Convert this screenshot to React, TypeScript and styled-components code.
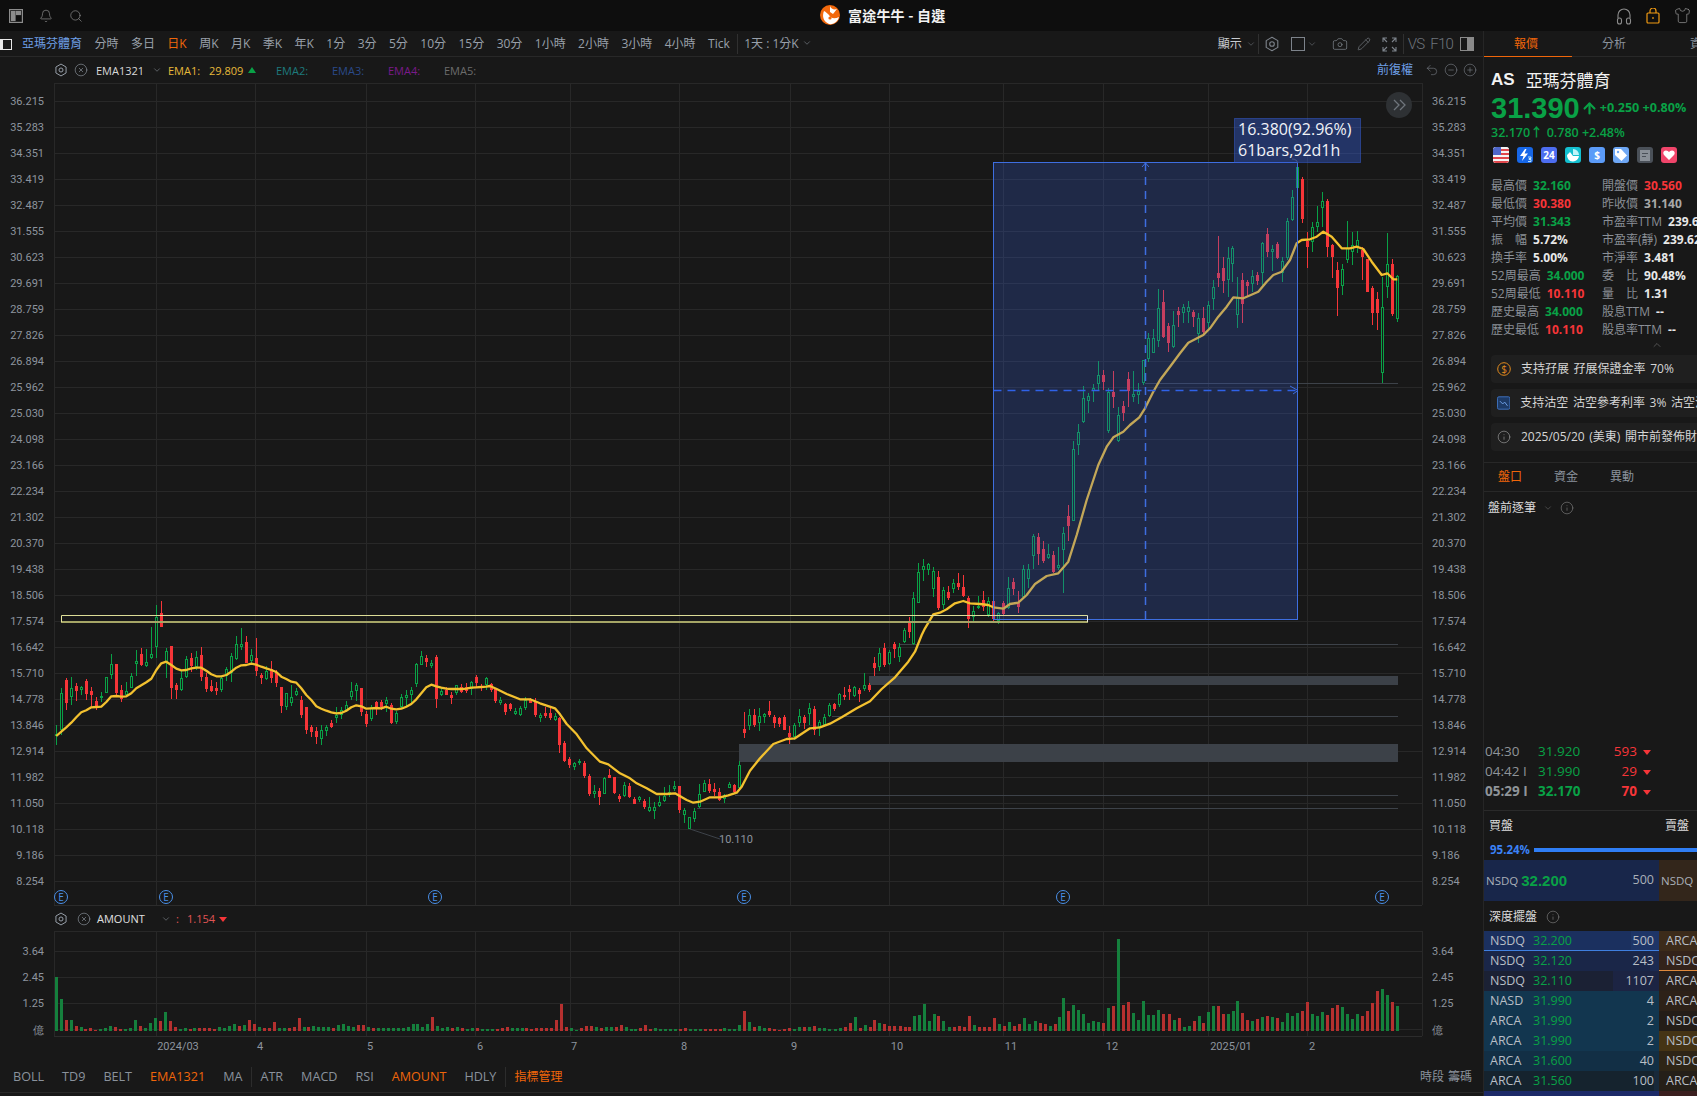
import React from "react";
import styled, { createGlobalStyle } from "styled-components";
import { Bell, Search, Shirt, Camera, Pencil, ChevronDown, ChevronUp, CircleX, Info, Undo2, CircleMinus, CirclePlus, ArrowUp } from "lucide-react";

const SANS = `"Open Sans", "Noto Sans CJK TC", sans-serif`;
const CJK = `"Noto Sans CJK TC", "Open Sans", sans-serif`;
const GREEN = "#09a146";
const RED = "#f63538";
const ORANGE = "#f0660a";

const Global = createGlobalStyle`
  html, body { margin: 0; padding: 0; background: #181818; overflow: hidden; }
  * { box-sizing: border-box; }
`;

const Root = styled.div`
  width: 1697px; height: 1096px; display: flex; flex-direction: column; overflow: hidden;
  background: #181818; color: #9aa2ad; font: 12px/1 ${SANS};
`;
const TitleBar = styled.header`
  height: 31px; flex: none; background: #0e0e0e; display: flex; align-items: center;
  justify-content: space-between; padding: 0 6px 0 9px; position: relative;
`;
const IconGroup = styled.div<{ $gap: number }>`
  display: flex; align-items: center; gap: ${p => p.$gap}px; color: #8c8c8c;
`;
const TitleCenter = styled.div`
  position: absolute; left: 820px; top: 5px; display: flex; align-items: center; gap: 8px;
  color: #f2f2f2; font: 700 14px/20px ${CJK}; letter-spacing: .2px;
`;
const Body = styled.div`flex: 1; display: flex; min-height: 0;`;
const ChartCol = styled.main`width: 1483px; flex: none; display: flex; flex-direction: column;`;

const Toolbar = styled.nav`
  height: 26px; flex: none; display: flex; align-items: center; padding: 1px 9px 0 0;
  border-bottom: 1px solid #282828; white-space: nowrap;
`;
const PanelTick = styled.span`
  width: 12px; height: 11px; margin-right: 10px; border: 1px solid #e8e8e8; border-left: 3px solid #e8e8e8; flex: none;
`;
const ToolItem = styled.span<{ $color?: string }>`
  margin-right: 12.45px; color: ${p => p.$color || "#98a0aa"}; font-size: 12px; font-family: ${SANS};
`;
const ShowLabel = styled.span`width: 24px; margin-right: 3px; color: #c8ccd0; font-size: 12px; flex: none;`;
const ToolDivider = styled.span<{ $m?: string }>`width: 1px; height: 20px; background: #303030; margin: ${p => p.$m || "0 6px 0 -5px"}; flex: none;`;
const ToolRight = styled.div`margin-left: auto; display: flex; align-items: center; color: #7d838b;`;
const ToolGlyph = styled.span<{ $w: number }>`
  width: ${p => p.$w}px; display: inline-flex; justify-content: center; align-items: center; flex: none;
`;
const ThinLabel = styled.span<{ $mr: number }>`
  font: 300 15px/1 Roboto, sans-serif; letter-spacing: -.8px; color: #6f757c; margin-right: ${p => p.$mr}px; flex: none;
`;
const PanelToggle = styled.span`
  width: 14px; height: 14px; border: 1px solid #8a8a8a; display: inline-block; flex: none;
  background: linear-gradient(90deg, transparent 50%, #8a8a8a 50%);
`;

const IndicatorRow = styled.div`
  height: 26px; flex: none; display: flex; align-items: center; padding: 0 6px 0 51px; font-size: 11px; white-space: nowrap;
`;
const IndText = styled.span<{ $color: string; $w?: number }>`
  color: ${p => p.$color}; ${p => (p.$w ? `width: ${p.$w}px;` : "")} flex: none;
`;
const IndSpacer = styled.span<{ $w: number }>`width: ${p => p.$w}px; flex: none; display: inline-flex; justify-content: center;`;
const IndRight = styled.div`margin-left: auto; display: flex; align-items: center; gap: 5px; color: #7d838b;`;
const Adjust = styled.span`color: #6e9fe6; font-size: 12px; margin-right: 7px;`;

const MainChartSvg = styled.svg`
  display: block; flex: none; width: 1483px; height: 823px;
  text { font-family: Roboto, sans-serif; font-size: 11px; fill: #8d949e; }
  .big { font-family: "Open Sans", sans-serif; font-size: 16px; fill: #f0f2f7; }
  .e { font-family: "Open Sans", sans-serif; font-size: 10px; fill: #4a90e8; }
`;
const AmountHeader = styled(IndicatorRow)`height: 25px;`;
const AmountSvg = styled.svg`
  display: block; flex: none; width: 1483px; height: 131px;
  text { font-family: Roboto, sans-serif; font-size: 11px; fill: #8d949e; }
`;
const BottomBar = styled.footer`
  height: 31px; flex: none; display: flex; align-items: center; padding: 0 11px 0 13px;
  border-bottom: 1px solid #282828; white-space: nowrap;
`;
const BottomItem = styled.span<{ $on?: boolean }>`
  margin-right: 18px; font-size: 12.6px; color: ${p => (p.$on ? ORANGE : "#8a929c")};
`;
const IndexManager = styled(BottomItem)`font-size: 12px;`;
const BottomDivider = styled.span`width: 1px; height: 20px; background: #2c2c2c; margin: 0 8px 0 -9px;`;
const BottomRight = styled.span`margin-left: auto; color: #8a929c; font-size: 12px; word-spacing: 1px;`;

/* side panel */
const Side = styled.aside`
  width: 214px; flex: none; border-left: 1px solid #262626; overflow: hidden; white-space: nowrap;
  background: #181818; font-family: ${SANS};
`;
const SideTabs = styled.div`height: 26px; display: flex; border-bottom: 1px solid #282828;`;
const SideTab = styled.div<{ $on?: boolean }>`
  width: 88px; flex: none; text-align: center; line-height: 26px; font-size: 12px; padding-right: 4px;
  color: ${p => (p.$on ? ORANGE : "#8a929c")}; ${p => (p.$on ? `border-bottom: 1px solid ${ORANGE}; height: 26px;` : "")}
`;
const Quote = styled.section`padding: 11px 0 0 7px;`;
const NameRow = styled.div`height: 24px; display: flex; align-items: center; gap: 11px; color: #f2f2f2;`;
const Ticker = styled.span`font: 700 17px/24px "Liberation Sans", sans-serif;`;
const CnName = styled.span`font: 400 17px/24px ${CJK};`;
const PriceRow = styled.div`height: 32px; display: flex; align-items: center; color: ${GREEN}; font: 700 12.6px/1 ${SANS};`;
const BigPrice = styled.span`font: 700 29px/32px "Liberation Sans", sans-serif; margin-right: 1px;`;
const PriceArrow = styled.span`display: inline-flex; margin-right: 2px;`;
const PreRow = styled.div`height: 18px; display: flex; align-items: center; gap: 4px; color: ${GREEN}; font: 600 12.5px/1 ${SANS};`;
const Badges = styled.div`display: flex; gap: 8px; margin: 5px 0 0 2px;`;
const Badge = styled.span<{ $bg: string }>`
  width: 16px; height: 16px; flex: none; border-radius: 3px; background: ${p => p.$bg}; overflow: hidden;
  display: inline-flex; align-items: center; justify-content: center; color: #fff; font: 700 10px/1 ${SANS};
`;
const Stats = styled.div`
  display: grid; grid-template-columns: 111px 1fr; grid-auto-rows: 18px; margin-top: 14px; align-items: center;
`;
const Stat = styled.div`display: flex; gap: 6px; align-items: center; font-size: 12px; color: #8a8f96;`;
const StatValue = styled.b<{ $c?: string }>`font-weight: 700; color: ${p => p.$c || "#e8e8e8"};`;
const Fold = styled.div`height: 16px; padding-left: 160px; color: #777;`;
const Banners = styled.div`display: flex; flex-direction: column; gap: 6px; width: 240px;`;
const Banner = styled.div`
  height: 28px; border-radius: 4px; background: #1f1f1f; display: flex; align-items: center; gap: 10px; padding-left: 6px;
  color: #d6d6d6; font-size: 12px; word-spacing: 1.5px;
`;
const Section = styled.div`
  margin-top: 11px; border-top: 1px solid #282828; height: 30px; border-bottom: 1px solid #282828; display: flex; padding-left: 14px; gap: 32px; align-items: center;
`;
const SubTab = styled.span<{ $on?: boolean }>`font-size: 12px; color: ${p => (p.$on ? ORANGE : "#8a929c")};`;
const FilterRow = styled.div`height: 32px; display: flex; align-items: center; gap: 7px; padding-left: 4px; color: #d8d8d8; font-size: 12px;`;
const Ticks = styled.div`margin-top: 218px; border-bottom: 1px solid #2a2a2a; padding: 0 0 8px 1px;`;
const TickRow = styled.div<{ $bold?: boolean }>`
  height: 20px; display: grid; grid-template-columns: 53px 54px 45px 14px; align-items: center;
  font-size: 13.5px; font-weight: ${p => (p.$bold ? 700 : 400)}; color: #8f9499;
`;
const TickPrice = styled.span`color: ${GREEN};`;
const TickQty = styled.span`color: ${RED}; text-align: right;`;
const TickDown = styled.span`
  justify-self: end; width: 0; height: 0; border: 4px solid transparent; border-top: 5px solid ${RED}; margin-top: 5px;
`;
const DepthHead = styled.div`display: flex; justify-content: space-between; padding: 9px 8px 0 5px; height: 31px; color: #dcdcdc; font-size: 12px; width: 213px;`;
const Ratio = styled.div`height: 15px; display: flex; align-items: center; gap: 4px; padding-left: 6px; color: #3b82f6; font-weight: 700; font-size: 11.5px;`;
const RatioBar = styled.span`flex: 1; height: 4px; background: #2f7ef5;`;
const BestRow = styled.div`margin-top: 3px; height: 41px; display: flex;`;
const BestCell = styled.div<{ $bg: string; $w: number }>`
  width: ${p => p.$w}px; flex: none; background: ${p => p.$bg}; display: flex; align-items: center; padding: 0 5px 0 2px;
  color: #aab0b8; font-size: 11.5px; gap: 3px; overflow: hidden;
`;
const BestPrice = styled.b`font: 700 15px/1 "Liberation Sans", sans-serif; color: ${GREEN}; flex: 1;`;
const BestQty = styled.span`font-size: 12.5px;`;
const DepthTitle = styled.div`height: 30px; display: flex; align-items: center; gap: 9px; padding: 2px 0 0 5px; color: #dcdcdc; font-size: 12px;`;
const Depth = styled.div`display: flex; flex-direction: column;`;
const DepthRow = styled.div`display: flex; height: 20px; flex: none;`;
const DepthLeft = styled.div<{ $bg: string; $line?: boolean }>`
  width: 175px; flex: none; background: ${p => p.$bg}; display: grid; grid-template-columns: 43px 1fr auto; align-items: center;
  padding: 0 5px 0 6px; font-size: 12.5px; color: #b8bec6;
  ${p => (p.$line ? "box-shadow: inset 0 -1px 0 #3f7fe0;" : "")}
`;
const DepthRight = styled.div<{ $bg: string; $line?: boolean }>`
  flex: 1; background: ${p => p.$bg}; padding: 0 0 0 7px; line-height: 20px; font-size: 12.5px; color: #b8bec6; overflow: hidden;
  ${p => (p.$line ? "box-shadow: inset 0 -1px 0 #e08a3c;" : "")}
`;
const DepthPrice = styled.span`color: ${GREEN};`;

type C = [number, number, number, number, number, number];
// [x, wickTop, bodyTop, bodyBottom, wickBottom, 1=red] in crop coordinates, 3x
const Z7: C[] = [[49,435,462,468,495,0],[64,325,340,450,465,0],[79,295,300,370,390,1],[94,292,325,350,375,0],[109,310,318,333,362,1],[124,318,320,330,345,0],[139,298,303,342,360,1],[154,320,334,345,380,1],[169,350,363,380,390,1],[184,335,347,355,365,0],[199,292,292,338,338,0],[214,222,252,286,298,0],[229,252,252,340,345,1],[244,315,330,357,365,1],[259,305,334,345,350,0],[274,278,288,325,325,0],[289,210,243,251,288,0],[304,205,222,255,258,1],[319,208,247,258,260,0],[334,140,222,233,238,0],[349,75,112,200,235,0],[364,63,100,140,140,1],[379,205,214,248,293,0],[394,198,198,323,358,1],[409,310,316,331,358,1],[424,270,295,330,332,0],[439,228,238,292,295,0],[454,220,235,258,275,1],[469,214,232,262,270,0],[484,202,226,290,302,1],[499,280,290,326,336,1],[514,300,318,332,335,1],[529,305,324,332,345,1],[544,288,293,330,335,0],[559,260,267,287,302,0],[574,220,228,280,305,0],[589,168,192,238,240,0],[604,144,192,200,210,0],[619,168,186,248,248,1],[634,208,226,244,248,0],[649,173,235,272,288,1],[664,280,285,294,312,1],[679,258,274,298,300,0],[694,243,268,293,310,1],[709,270,276,308,322,1],[724,320,322,378,398,1],[739,338,340,380,390,0],[754,315,350,368,378,0],[769,325,332,344,348,0],[784,348,360,404,415,1],[799,380,380,450,462,1],[814,435,440,456,470,1],[829,442,454,472,492,1],[844,435,451,476,494,0],[859,435,440,452,468,0],[874,420,430,440,444,1],[889,382,405,413,428,0],[904,382,390,404,418,0],[919,362,374,392,395,0],[934,307,332,352,360,0],[949,310,316,332,362,0],[964,325,325,396,408,1],[979,392,402,432,440,1],[994,376,380,416,422,0],[1009,362,367,380,405,1],[1024,360,366,380,390,1],[1039,352,360,372,395,0],[1054,370,376,428,432,1],[1069,392,398,426,432,0],[1084,342,352,382,385,0],[1099,330,344,354,378,0],[1114,322,330,346,375,0],[1129,248,252,312,320,0],[1144,212,228,254,256,0],[1159,225,235,245,260,1],[1174,240,250,258,264,0],[1189,225,232,356,384,1],[1204,322,334,345,348,0],[1219,322,330,345,345,1],[1234,335,346,354,372,1],[1249,314,316,340,344,0],[1264,312,322,336,340,1],[1279,310,322,332,338,1],[1294,302,305,328,344,0],[1309,285,291,310,320,1],[1324,312,318,324,332,1],[1339,290,295,316,330,0]];
const Z8: C[] = [[33,190,193,210,215,1],[46,205,208,243,248,1],[61,232,240,250,255,0],[76,248,252,276,285,1],[91,250,252,267,272,1],[106,265,272,282,285,0],[121,258,263,286,288,0],[136,232,240,265,270,0],[151,235,238,248,250,1],[166,235,245,285,292,1],[181,278,284,294,305,0],[196,260,280,288,295,1],[211,265,280,295,300,1],[226,280,288,300,302,0],[239,292,295,374,398,1],[254,362,368,422,425,1],[269,410,418,435,445,1],[284,425,430,440,450,0],[299,418,422,430,435,0],[314,422,428,468,475,1],[329,462,468,522,528,1],[344,495,514,522,535,0],[359,505,512,530,556,1],[374,470,474,522,522,0],[389,448,465,474,475,1],[404,470,472,518,522,1],[419,522,528,538,547,1],[434,485,495,528,530,0],[449,490,497,532,535,1],[464,530,538,552,552,1],[479,528,532,540,545,0],[494,537,543,562,568,1],[509,530,562,572,575,0],[524,545,562,572,597,0],[539,528,547,557,560,0],[554,500,527,542,545,0],[569,495,515,525,532,0],[584,483,498,508,512,0],[599,497,497,570,580,1],[614,565,570,584,608,0],[629,590,592,626,628,0],[644,565,574,596,605,0],[659,492,522,560,565,0],[674,480,488,515,516,0],[689,478,492,512,518,1],[704,490,508,516,528,1],[719,505,515,540,542,1],[734,522,525,538,548,0],[749,485,492,504,505,0],[764,492,495,515,520,1],[779,423,436,505,510,0],[794,275,328,340,353,1],[809,268,286,318,330,0],[824,268,286,316,322,1],[839,265,288,308,332,0],[854,278,283,292,310,0],[869,243,273,285,292,1],[884,285,290,310,324,1],[899,290,295,312,320,1],[914,285,290,330,330,1],[929,318,340,352,372,1],[944,308,316,350,360,0],[959,268,289,308,320,0],[974,285,290,308,328,1],[989,248,265,282,315,0],[1004,258,268,330,345,1],[1019,300,307,320,348,0],[1034,282,290,314,315,0],[1049,250,256,288,290,0],[1064,248,252,266,272,1],[1079,218,222,254,260,0],[1094,200,224,232,240,1],[1109,195,208,215,240,1],[1124,198,202,228,232,0],[1139,205,210,222,245,1],[1154,160,196,208,212,0],[1169,190,195,209,215,1],[1184,112,130,145,168,1],[1199,85,100,140,152,0],[1214,70,84,136,140,1],[1229,90,95,132,135,0],[1244,66,72,87,115,1],[1259,68,82,112,125,0],[1272,25,30,65,68,0],[1287,-10,8,35,55,1],[1300,-85,-66,72,75,0]];
const Z11: C[] = [[115,40,66,160,160,0],[130,28,48,60,92,0],[145,38,42,60,75,0],[160,52,64,116,140,0],[175,63,82,175,180,1],[190,110,120,164,178,0],[205,108,126,143,150,1],[220,88,99,116,130,0],[235,70,98,111,120,1],[250,75,112,138,142,1],[265,138,144,207,233,1],[280,168,184,200,212,0],[295,138,168,174,178,0]];
const Z6: C[] = [[11,632,660,682,692,1],[26,652,664,704,710,0],[41,662,664,718,728,1],[56,697,698,722,732,0],[71,662,670,702,708,1],[86,590,625,684,688,0],[101,595,606,628,645,1],[116,632,668,680,698,1],[131,556,568,652,655,0],[146,552,568,598,625,0],[161,462,468,528,566,0],[176,460,470,522,555,1],[191,484,507,542,548,1],[206,492,523,534,538,0],[221,514,526,576,580,1],[236,502,556,565,570,0],[251,442,460,510,638,0],[266,376,408,438,482,1],[281,183,208,422,422,0],[296,133,157,194,225,0],[311,18,55,126,130,0],[326,40,48,62,98,0],[341,12,25,33,66,0]];
const Z5: C[] = [[356,783,825,853,870,0],[371,810,825,846,870,1],[386,865,877,992,1000,0],[401,812,875,890,925,1],[416,920,945,1022,1025,0],[431,904,918,938,962,1],[446,815,838,872,920,1],[461,812,882,892,905,0],[476,850,874,884,912,0],[491,780,780,848,855,0],[506,700,714,778,785,0],[521,688,715,760,760,0],[536,568,625,722,740,0],[551,570,606,712,715,1],[566,668,678,730,755,1],[581,632,674,742,745,0],[596,620,632,646,680,1],[611,612,620,638,668,0],[626,603,622,635,668,0],[641,630,636,652,680,1],[656,640,654,702,730,0],[671,620,654,695,708,1],[686,602,616,670,690,0],[701,540,562,596,630,0],[716,408,520,534,560,1],[731,472,504,542,578,1],[746,440,475,540,590,0],[757,437,445,492,545,0],[772,530,590,646,685,0],[787,520,540,612,670,1],[802,540,546,558,590,1],[817,510,528,552,575,0],[832,515,525,542,555,1],[847,425,430,520,555,0],[862,385,402,456,470,1],[877,435,448,457,512,0],[892,425,432,474,478,1],[907,470,484,520,545,0],[922,355,362,475,480,0],[937,270,290,360,362,0],[952,195,202,265,290,0],[967,232,236,356,368,1],[982,395,422,442,503,1],[997,365,382,425,456,0],[1012,318,367,380,395,0],[1027,276,304,325,380,0],[1042,298,303,442,472,1],[1057,432,436,470,533,1],[1072,487,510,565,648,1],[1087,492,508,558,585,0],[1102,363,445,480,490,0],[1117,395,435,455,495,0],[1132,392,420,440,460,0],[1147,440,450,470,540,1],[1162,476,478,575,575,1],[1177,558,565,638,675,1],[1192,575,598,638,690,1],[1207,532,620,820,850,0],[1222,400,492,560,595,0],[1237,478,492,642,648,1],[1252,526,528,658,665,0]];

type Seg = { ox: number; oy: number; data: C[] };
const SEGS: Seg[] = [
  { ox: 40, oy: 580, data: Z7 },
  { ox: 480, oy: 620, data: Z8 },
  { ox: 880, oy: 550, data: Z11 },
  { ox: 980, oy: 380, data: Z6 },
  { ox: 980, oy: 100, data: Z5 },
];

const emaPath = (): string => {
  const parts: [number, number, number[][]][] = [
    [40, 580, [[49,468],[64,455],[79,442],[94,428],[109,412],[124,397],[139,391],[154,382],[169,381],[184,380],[199,366],[214,349],[229,348],[244,350],[259,349],[274,340],[289,325],[304,316],[319,307],[334,296],[349,270],[364,250],[379,245],[394,255],[409,266],[424,271],[439,270],[454,265],[469,263],[484,263],[499,272],[514,283],[529,289],[544,289],[559,285],[574,275],[589,263],[604,256],[619,255],[634,251],[649,254],[664,260],[679,265],[694,270],[709,276],[724,290],[739,297],[754,305],[769,308],[784,325],[799,345],[814,360],[829,379],[844,386],[859,392],[874,397],[889,400],[904,399],[919,392],[934,382],[949,376],[964,379],[979,386],[994,385],[1009,384],[1024,385],[1039,380],[1054,386],[1069,388],[1084,386],[1099,380],[1114,372],[1129,358],[1144,340],[1159,322],[1174,314],[1189,319],[1204,323],[1219,326],[1234,327],[1249,327],[1264,327],[1279,326],[1294,323],[1309,322],[1324,321],[1339,320]]],
    [480, 620, [[30,198],[50,207],[80,222],[120,238],[150,238],[180,250],[225,265],[240,283],[260,312],[290,343],[320,385],[360,425],[385,433],[420,460],[450,475],[470,490],[500,505],[530,522],[560,522],[585,520],[620,540],[640,548],[660,545],[690,532],[720,532],[745,526],[770,518],[785,500],[810,452],[840,415],[880,372],[920,357],[945,355],[990,325],[1020,322],[1050,311],[1085,292],[1130,265],[1170,244],[1205,207],[1245,172],[1285,125],[1305,95],[1325,45]]],
    [880, 550, [[135,235],[160,193],[180,188],[200,178],[225,160],[250,153],[270,160],[300,162],[325,165]]],
    [980, 380, [[40,682],[70,686],[90,672],[115,668],[140,645],[165,612],[200,588],[235,580],[265,545],[290,465],[320,360],[355,255],[380,200],[400,172],[430,155],[450,135],[478,112],[495,85],[520,35]]],
    [980, 100, [[540,840],[570,800],[600,760],[625,728],[670,705],[690,685],[715,650],[740,620],[760,592],[790,595],[835,575],[860,545],[880,525],[905,515],[930,480],[950,430],[965,420],[990,418],[1010,410],[1030,395],[1055,410],[1085,445],[1110,445],[1130,440],[1150,447],[1175,485],[1205,525],[1222,520],[1240,538],[1252,538]]],
  ];
  const pts: string[] = [];
  parts.forEach(([ox, oy, list]) => list.forEach(([x, y]) => pts.push(`${(ox + x / 3).toFixed(1)},${(oy + y / 3).toFixed(1)}`)));
  return "M" + pts.join("L");
};

const V_GRID = [54, 156, 255, 366, 475, 570, 679, 790, 889, 1003, 1103, 1208, 1307, 1422];
const PRICES = ["36.215","35.283","34.351","33.419","32.487","31.555","30.623","29.691","28.759","27.826","26.894","25.962","25.030","24.098","23.166","22.234","21.302","20.370","19.438","18.506","17.574","16.642","15.710","14.778","13.846","12.914","11.982","11.050","10.118","9.186","8.254"];
const GRID = "#282828";
const CG = "#09a146";
const CR = "#f63538";

const Candles: React.FC = () => (
  <g shapeRendering="crispEdges">
    {SEGS.map((s, si) =>
      s.data.map((c, i) => {
        const px = Math.floor(s.ox + c[0] / 3);
        const y = (v: number) => Math.round(s.oy + v / 3);
        const col = c[5] ? CR : CG;
        return (
          <g key={`${si}-${i}`}>
            <rect x={px} y={y(c[1])} width={1} height={Math.max(1, y(c[4]) - y(c[1]))} fill={col} />
            {c[5] ? (
              <rect x={px - 1} y={y(c[2])} width={3} height={Math.max(1, y(c[3]) - y(c[2]))} fill={col} />
            ) : (
              <rect x={px - 0.5} y={y(c[2]) + 0.5} width={2} height={Math.max(1, y(c[3]) - y(c[2]) - 1)} fill="#181818" stroke={col} strokeWidth={1} />
            )}
          </g>
        );
      })
    )}
  </g>
);

const Rays: React.FC = () => (
  <g shapeRendering="crispEdges">
    {[[899, 644], [832, 716], [735, 795], [697, 808], [1145, 383]].map(([x, y]) => (
      <rect key={y} x={x} y={y} width={1398 - x} height={1} fill="#3d4249" />
    ))}
    <rect x={869} y={676} width={529} height={9} fill="#3c4148" />
    <rect x={739} y={744} width={659} height={18} fill="#3c4148" />
  </g>
);

const EMark: React.FC<{ x: number }> = ({ x }) => (
  <g>
    <circle cx={x} cy={897} r={6.5} fill="#181818" stroke="#4a90e8" strokeWidth={1} />
    <text x={x} y={900.5} textAnchor="middle" className="e">E</text>
  </g>
);

const MainChart: React.FC = () => (
  <MainChartSvg viewBox="0 83 1483 823">
    <g shapeRendering="crispEdges">
      {PRICES.map((_, i) => <rect key={i} x={54} y={101 + i * 26} width={1368} height={1} fill={GRID} />)}
      {V_GRID.map(x => <rect key={x} x={x} y={83} width={1} height={822} fill={GRID} />)}
      <rect x={54} y={83} width={1368} height={1} fill={GRID} />
      <rect x={54} y={905} width={1368} height={1} fill="#2c2c2c" />
    </g>
    {PRICES.map((p, i) => (
      <g key={p}>
        <text x={44} y={105 + i * 26} textAnchor="end">{p}</text>
        <text x={1432} y={105 + i * 26}>{p}</text>
      </g>
    ))}
    <Rays />
    <Candles />
    <path d={emaPath()} fill="none" stroke="#f3c12f" strokeWidth={2.3} strokeLinejoin="round" />
    <path d="M690 829L720 839" stroke="#3d4249" fill="none" />
    <text x={719} y={843}>10.110</text>

    <rect x={993.5} y={162.5} width={304} height={457} fill="rgba(52,92,212,.25)" stroke="#3e6ee0" strokeWidth={1} />
    <path d="M993.5 390.5H1298" stroke="#2f62e8" strokeWidth={1.5} strokeDasharray="8 6" fill="none" />
    <path d="M1145.5 163V619" stroke="#3e6ee0" strokeWidth={1.5} strokeDasharray="8 6" fill="none" />
    <path d="M1142 167L1145.5 163L1149 167M1290 386L1298 390.5L1293 394" stroke="#3e6ee0" fill="none" />
    <path d="M1292 159Q1297 159 1297.5 163" stroke="#555" fill="none" />

    <path d="M61.5 615.5H1087.5" stroke="#dcdc96" fill="none" />
    <path d="M61 622H1088" stroke="#a5a566" strokeWidth={2} fill="none" />
    <path d="M61.5 615.5V622" stroke="#e4e49c" fill="none" />
    <path d="M1087.5 615.5V622" stroke="#e8e8e0" fill="none" />

    <rect x={1234.5} y={118.5} width={126} height={44} fill="rgba(52,92,212,.42)" stroke="rgba(52,92,212,.5)" />
    <text x={1238} y={135} className="big">16.380(92.96%)</text>
    <text x={1238} y={156} className="big">61bars,92d1h</text>

    <circle cx={1399} cy={105} r={13} fill="#2e3134" />
    <path d="M1394 100l5 5l-5 5M1400 100l5 5l-5 5" stroke="#6f757c" strokeWidth={1.3} fill="none" />
    {[61, 166, 435, 744, 1063, 1382].map(x => <EMark key={x} x={x} />)}
  </MainChartSvg>
);

const VOL_A = [54,32,-11,11,-5,4,-2,-3,-1,2,3,5,-4,-2,2,3,11,-5,3,8,13,-10,19,-10,-4,2,3,-2,3,-3,-3,-3,-2,4,3,5,7,-5,6,-11,-7,4,-3,-3,-9,3,3,-3,-4,-13,4,-4,5,4,4,4,-3,6,7,5,4,-6,-6,4,-3,3,3,3,3,3,3,4,7,7,4,7,-14,5,3,4,-3,4,-3,2,3,-3,2,2,2,-2,-3,-4,3,3,3,-3,-2,-3,-3,-3,-3,-11,-27,-4,3,1,-3,-5,-5,4,-3,4,4,-4,-6,4,2,2,-3,-6,-2,3,2,2,2,2,-2,-3,2,2,2];
const VOL_B: number[][] = [[0,2],[10,-2],[20,-2],[30,-2],[40,-2],[49,3],[58,2],[68,2],[78,6],[88,-20],[98,9],[108,-4],[118,5],[128,3],[138,-3],[148,-2],[158,-1],[168,-2],[178,-3],[188,2],[198,4],[208,-4],[218,4],[228,-5],[238,3],[248,3],[258,2],[268,2],[278,3],[288,-4],[298,-8],[308,14],[318,-3],[328,6],[338,-4],[347,-11],[357,8],[367,-7],[377,-5],[387,-5],[397,-5],[407,-4],[415,-4],[425,15],[435,16],[445,27],[455,10],[465,17],[473,-15],[483,10],[495,4],[505,-4],[515,-5],[525,-4],[535,-15],[545,6],[555,-4],[565,-4],[575,-4],[585,-13],[595,7],[605,-5],[615,9],[625,-5],[635,-7],[645,13],[655,7],[665,10],[675,-8],[685,-7],[695,5],[705,-7],[714,14],[721,33],[731,-20],[741,26],[751,21],[761,17],[771,8],[781,10],[791,9],[801,-8],[811,23],[821,-25],[831,92],[841,-26],[851,-29],[861,18],[871,11],[881,30],[891,16],[901,16],[911,21],[921,-17],[931,-17],[941,11],[951,-13],[961,4],[971,5],[981,-10],[991,15],[999,-8],[1009,19],[1019,25],[1029,-25],[1039,-17],[1049,17],[1059,20],[1067,30],[1077,-18],[1087,-11],[1097,10],[1107,-12],[1117,14],[1127,-15],[1137,14],[1146,-13],[1156,9],[1166,18],[1176,15],[1186,18],[1196,-20],[1206,-29],[1216,17],[1226,15],[1236,19],[1246,-16],[1256,-23],[1265,-26],[1275,24],[1285,17],[1295,12],[1305,17],[1315,-15],[1325,-20],[1335,-28],[1345,-40],[1355,42],[1365,36],[1375,-29],[1385,25]];

const DATE_LABELS: [string, number][] = [["2024/03",178],["4",260],["5",370],["6",480],["7",574],["8",684],["9",794],["10",897],["11",1011],["12",1112],["2025/01",1231],["2",1312]];

const AmountChart: React.FC = () => {
  const bars: { x: number; h: number }[] = [];
  VOL_A.forEach((h, i) => bars.push({ x: 56.25 + 4.955 * i, h }));
  VOL_B.forEach(([x, h]) => bars.push({ x: 700 + x / 1.985, h }));
  return (
    <AmountSvg viewBox="0 931 1483 131">
      <g shapeRendering="crispEdges">
        {[951, 977, 1003, 1029].map(y => <rect key={y} x={54} y={y} width={1368} height={1} fill={GRID} />)}
        {V_GRID.map(x => <rect key={x} x={x} y={931} width={1} height={105} fill={GRID} />)}
        <rect x={54} y={931} width={1368} height={1} fill={GRID} />
        <rect x={54} y={1036} width={1368} height={1} fill="#2c2c2c" />
        {bars.map((b, i) => (
          <rect key={i} x={Math.round(b.x - 1.5)} y={1031 - Math.abs(b.h)} width={3} height={Math.abs(b.h)} fill={b.h < 0 ? "#b5302f" : "#15803d"} />
        ))}
      </g>
      {[["3.64",955],["2.45",981],["1.25",1007],["億",1034]].map(([t, y]) => (
        <g key={t as string}>
          <text x={44} y={y as number} textAnchor="end">{t}</text>
          <text x={1432} y={y as number}>{t}</text>
        </g>
      ))}
      {DATE_LABELS.map(([t, x]) => <text key={t} x={x} y={1050} textAnchor="middle">{t}</text>)}
    </AmountSvg>
  );
};

const Gear: React.FC<{ s?: number }> = ({ s = 14 }) => (
  <svg width={s} height={s} viewBox="0 0 16 16" fill="none" stroke="currentColor" strokeWidth={1.1}>
    <path d="M8 1.2L13.8 4.6V11.4L8 14.8L2.2 11.4V4.6Z" strokeLinejoin="round" />
    <circle cx={8} cy={8} r={2.3} />
  </svg>
);

const Logo: React.FC = () => (
  <svg width={20} height={20} viewBox="0 0 20 20">
    <circle cx={10} cy={10} r={10} fill="#f2690d" />
    <path d="M4 6C2 11 3 16 9 19C14 20 18 16 19 12C15 14 11 14 9 10C7 8 6 7 4 6Z" fill="#fff" />
    <path d="M10 1C11 4 14 5 17 4L13 9L10 7Z" fill="#fff" />
    <circle cx={10} cy={13} r={1.6} fill="#f2690d" />
  </svg>
);

const Headset: React.FC = () => (
  <svg width={16} height={18} viewBox="0 0 16 18" fill="none" stroke="currentColor" strokeWidth={1.1}>
    <path d="M2 11V8a6 6 0 0 1 12 0v3" />
    <rect x={1.5} y={11} width={4} height={6} rx={2} />
    <rect x={10.5} y={11} width={4} height={6} rx={2} />
  </svg>
);
const OrangeLock: React.FC = () => (
  <svg width={14} height={16} viewBox="0 0 14 16" fill="none" stroke="#f09a13" strokeWidth={1.2}>
    <rect x={1} y={5} width={12} height={10} rx={1} />
    <path d="M4 5V3a3 3 0 0 1 6 0v2" />
    <path d="M7 9v2" />
  </svg>
);
const LayoutGlyph: React.FC = () => (
  <svg width={14} height={14} viewBox="0 0 14 14" fill="none" stroke="currentColor" strokeWidth={1.2}>
    <rect x={.6} y={.6} width={12.8} height={12.8} />
    <rect x={2.5} y={2.5} width={3.5} height={9} fill="currentColor" />
    <rect x={7.5} y={2.5} width={4} height={3} fill="currentColor" />
  </svg>
);
const FullScreen: React.FC = () => (
  <svg width={15} height={15} viewBox="0 0 15 15" fill="none" stroke="currentColor" strokeWidth={1.1}>
    <path d="M1 5V1H5M10 1H14V5M14 10V14H10M5 14H1V10M1.5 1.5L5 5M13.5 1.5L10 5M13.5 13.5L10 10M1.5 13.5L5 10" />
  </svg>
);

const TOOL_ITEMS = ["分時","多日","日K","周K","月K","季K","年K","1分","3分","5分","10分","15分","30分","1小時","2小時","3小時","4小時","Tick"];

const STATS: [string, string, string?][] = [
  ["最高價","32.160",GREEN],["開盤價","30.560",RED],
  ["最低價","30.380",RED],["昨收價","31.140","#a8a8a8"],
  ["平均價","31.343",GREEN],["市盈率TTM","239.62"],
  ["振　幅","5.72%"],["市盈率(靜)","239.62"],
  ["換手率","5.00%"],["市淨率","3.481"],
  ["52周最高","34.000",GREEN],["委　比","90.48%"],
  ["52周最低","10.110",RED],["量　比","1.31"],
  ["歷史最高","34.000",GREEN],["股息TTM","--"],
  ["歷史最低","10.110",RED],["股息率TTM","--"],
];

const DEPTH: [string, string, string, string, string, string, boolean?, boolean?][] = [
  ["NSDQ","32.200","500","linear-gradient(90deg,#1b305f 84%,#1e3567 84%)","ARCA","#3c2b1a",true],
  ["NSDQ","32.120","243","linear-gradient(90deg,#1a2648 95%,#1c2b52 95%)","NSDQ","#33231a",false,true],
  ["NSDQ","32.110","1107","linear-gradient(90deg,#1b2134 74%,#1c2443 74%)","ARCA","#2a2019"],
  ["NASD","31.990","4","#12364f","ARCA","#2d2118"],
  ["ARCA","31.990","2","#12364f","NSDQ","#241d18"],
  ["ARCA","31.990","2","#12364f","NSDQ","#453415"],
  ["ARCA","31.600","40","#122f45","NSDQ","#2e2516"],
  ["ARCA","31.560","100","linear-gradient(90deg,#15232e 97%,#18293a 97%)","ARCA","#251f18"],
  ["ARCA","31.500","5","#1c2a68","NSDQ","#3b1f1f"],
];

const Flag: React.FC = () => (
  <svg width={16} height={16} viewBox="0 0 16 16">
    <rect width={16} height={16} fill="#f4f4f4" />
    {[2, 6, 10, 14].map(y => <rect key={y} y={y} width={16} height={2} fill="#e0474c" />)}
    <rect width={8} height={8} fill="#4f67c9" />
  </svg>
);
const Bolt: React.FC = () => (
  <svg width={14} height={14} viewBox="0 0 14 14"><path d="M7 1L2 8H5.5L4 13L10 5.5H6.5L8.5 1Z" fill="#fff" /><path d="M10 9H13V10.5H11V11.5H13V13.5H10" fill="none" stroke="#dff" strokeWidth={.8} /></svg>
);
const TealClock: React.FC = () => (
  <svg width={14} height={14} viewBox="0 0 14 14"><path d="M7 1A6 6 0 0 1 13 7H7Z" fill="#bff4f8" /><path d="M1 7A6 6 0 0 0 13 8H7L4 4Z" fill="#fff" /></svg>
);
const TagGlyph: React.FC = () => (
  <svg width={14} height={14} viewBox="0 0 14 14"><path d="M1 1H7L13 7.5L7.5 13L1 7Z" fill="#fff" /><circle cx={4} cy={4} r={1.2} fill="#6ea7f5" /></svg>
);
const Heart: React.FC = () => (
  <svg width={12} height={12} viewBox="0 0 12 12"><path d="M6 11L1 6C-.5 4 .5 1.5 3 1.5C4.3 1.5 5.4 2.3 6 3.3C6.6 2.3 7.7 1.5 9 1.5C11.5 1.5 12.5 4 11 6Z" fill="#fff" /></svg>
);
const Doc: React.FC<{ c: string }> = ({ c }) => (
  <svg width={10} height={11} viewBox="0 0 10 11"><path d="M0 0H10V11H0Z M2 3V4H8V3Z M2 6V7H6V6Z" fill={c} fillRule="evenodd" /></svg>
);

const App: React.FC = () => (
  <Root>
    <Global />
    <TitleBar>
      <IconGroup $gap={16}>
        <LayoutGlyph />
        <Bell size={14} strokeWidth={1.2} />
        <Search size={14} strokeWidth={1.2} />
      </IconGroup>
      <TitleCenter><Logo />富途牛牛 - 自選</TitleCenter>
      <IconGroup $gap={14}>
        <Headset />
        <OrangeLock />
        <Shirt size={17} strokeWidth={1.1} />
      </IconGroup>
    </TitleBar>
    <Body>
      <ChartCol>
        <Toolbar>
          <PanelTick />
          <ToolItem $color="#6e9fe6">亞瑪芬體育</ToolItem>
          {TOOL_ITEMS.map(t => <ToolItem key={t} $color={t === "日K" ? ORANGE : undefined}>{t}</ToolItem>)}
          <ToolDivider />
          <ToolItem>1天 : 1分K <ChevronDown size={10} strokeWidth={1.2} /></ToolItem>
          <ToolRight>
            <ShowLabel>顯示</ShowLabel>
            <ToolGlyph $w={12}><ChevronDown size={10} strokeWidth={1.2} /></ToolGlyph>
            <ToolDivider $m="0 0 0 1px" />
            <ToolGlyph $w={26}><Gear s={16} /></ToolGlyph>
            <ToolGlyph $w={5} />
            <ToolGlyph $w={16}><svg width={14} height={14}><rect x=".5" y=".5" width="13" height="13" fill="none" stroke="currentColor" /></svg></ToolGlyph>
            <ToolGlyph $w={12}><ChevronDown size={10} strokeWidth={1.2} /></ToolGlyph>
            <ToolGlyph $w={11} />
            <ToolGlyph $w={22}><Camera size={16} strokeWidth={1.1} /></ToolGlyph>
            <ToolGlyph $w={26}><Pencil size={14} strokeWidth={1.1} /></ToolGlyph>
            <ToolGlyph $w={26}><FullScreen /></ToolGlyph>
            <ToolDivider $m="0 4px 0 0" />
            <ThinLabel $mr={6}>VS</ThinLabel>
            <ThinLabel $mr={7}>F10</ThinLabel>
            <PanelToggle />
          </ToolRight>
        </Toolbar>
        <IndicatorRow>
          <IndSpacer $w={20}><Gear /></IndSpacer>
          <IndSpacer $w={20}><CircleX size={14} strokeWidth={1} /></IndSpacer>
          <IndSpacer $w={5} />
          <IndText $color="#d8d8d8" $w={50}>EMA1321</IndText>
          <IndSpacer $w={22}><ChevronDown size={10} strokeWidth={1.2} /></IndSpacer>
          <IndText $color="#e6b93a" $w={41}>EMA1:</IndText>
          <IndText $color="#e6b93a" $w={38}>29.809</IndText>
          <IndSpacer $w={10}><ToolUp /></IndSpacer>
          <IndSpacer $w={19} />
          <IndText $color="#1d7a7d" $w={56}>EMA2:</IndText>
          <IndText $color="#2a4a8a" $w={56}>EMA3:</IndText>
          <IndText $color="#7a1a8a" $w={56}>EMA4:</IndText>
          <IndText $color="#6c6c6c">EMA5:</IndText>
          <IndRight>
            <Adjust>前復權</Adjust>
            <Undo2 size={14} strokeWidth={1} />
            <CircleMinus size={14} strokeWidth={1} />
            <CirclePlus size={14} strokeWidth={1} />
          </IndRight>
        </IndicatorRow>
        <MainChart />
        <AmountHeader>
          <IndSpacer $w={20}><Gear /></IndSpacer>
          <IndSpacer $w={26}><CircleX size={14} strokeWidth={1} /></IndSpacer>
          <IndText $color="#e0e0e0" $w={59}>AMOUNT</IndText>
          <IndSpacer $w={20}><ChevronDown size={10} strokeWidth={1.2} /></IndSpacer>
          <IndText $color="#e05555" $w={11}>:</IndText>
          <IndText $color="#e05555" $w={32}>1.154</IndText>
          <TickDown />
        </AmountHeader>
        <AmountChart />
        <BottomBar>
          <BottomItem>BOLL</BottomItem>
          <BottomItem>TD9</BottomItem>
          <BottomItem>BELT</BottomItem>
          <BottomItem $on>EMA1321</BottomItem>
          <BottomItem>MA</BottomItem>
          <BottomDivider />
          <BottomItem>ATR</BottomItem>
          <BottomItem>MACD</BottomItem>
          <BottomItem>RSI</BottomItem>
          <BottomItem $on>AMOUNT</BottomItem>
          <BottomItem>HDLY</BottomItem>
          <BottomDivider />
          <IndexManager $on>指標管理</IndexManager>
          <BottomRight>時段 籌碼</BottomRight>
        </BottomBar>
      </ChartCol>
      <Side>
        <SideTabs>
          <SideTab $on>報價</SideTab>
          <SideTab>分析</SideTab>
          <SideTab>資金</SideTab>
        </SideTabs>
        <Quote>
          <NameRow><Ticker>AS</Ticker><CnName>亞瑪芬體育</CnName></NameRow>
          <PriceRow>
            <BigPrice>31.390</BigPrice>
            <PriceArrow><ArrowUp size={17} strokeWidth={3} /></PriceArrow>
            <span>+0.250 +0.80%</span>
          </PriceRow>
          <PreRow><span>32.170↑</span><span>0.780 +2.48%</span></PreRow>
          <Badges>
            <Badge $bg="#eee"><Flag /></Badge>
            <Badge $bg="#1767e8"><Bolt /></Badge>
            <Badge $bg="#4d6df0">24</Badge>
            <Badge $bg="#14c0d0"><TealClock /></Badge>
            <Badge $bg="#5b9bf8">$</Badge>
            <Badge $bg="#6ea7f5"><TagGlyph /></Badge>
            <Badge $bg="#4a5058"><Doc c="#8a9098" /></Badge>
            <Badge $bg="#f0456a"><Heart /></Badge>
          </Badges>
          <Stats>
            {STATS.map(([l, v, c]) => (
              <Stat key={l}>{l}<StatValue $c={c}>{v}</StatValue></Stat>
            ))}
          </Stats>
          <Fold><ChevronUp size={12} strokeWidth={1.2} /></Fold>
          <Banners>
            <Banner>
              <svg width={14} height={14} viewBox="0 0 14 14"><circle cx={7} cy={7} r={6.3} fill="none" stroke="#e08a1e" /><text x={7} y={10.5} textAnchor="middle" fontSize={10} fontFamily="Open Sans" fill="#e08a1e">$</text></svg>
              支持孖展 孖展保證金率 70%
            </Banner>
            <Banner>
              <svg width={14} height={14} viewBox="0 0 14 14"><rect x={.5} y={.5} width={13} height={13} rx={1.5} fill="#1d3a66" stroke="#3f72c0" /><path d="M3 5l3 3l2-2l3 4" fill="none" stroke="#6ea0e6" /></svg>
              支持沽空 沽空參考利率 3% 沽空池剩餘
            </Banner>
            <Banner><Info size={14} strokeWidth={1} color="#aaa" />2025/05/20 (美東) 開市前發佈財報</Banner>
          </Banners>
        </Quote>
        <Section>
          <SubTab $on>盤口</SubTab>
          <SubTab>資金</SubTab>
          <SubTab>異動</SubTab>
        </Section>
        <FilterRow>盤前逐筆 <ChevronDown size={10} strokeWidth={1.2} color="#777" /><Info size={14} strokeWidth={1} color="#888" /></FilterRow>
        <Ticks>
          <TickRow><span>04:30</span><TickPrice>31.920</TickPrice><TickQty>593</TickQty><TickDown /></TickRow>
          <TickRow><span>04:42 I</span><TickPrice>31.990</TickPrice><TickQty>29</TickQty><TickDown /></TickRow>
          <TickRow $bold><span>05:29 I</span><TickPrice>32.170</TickPrice><TickQty>70</TickQty><TickDown /></TickRow>
        </Ticks>
        <DepthHead><span>買盤</span><span>賣盤</span></DepthHead>
        <Ratio>95.24%<RatioBar /></Ratio>
        <BestRow>
          <BestCell $bg="#18264a" $w={175}>NSDQ <BestPrice>32.200</BestPrice><BestQty>500</BestQty></BestCell>
          <BestCell $bg="#33261b" $w={39}>NSDQ</BestCell>
        </BestRow>
        <DepthTitle>深度擺盤 <Info size={14} strokeWidth={1} color="#888" /></DepthTitle>
        <Depth>
          {DEPTH.map(([v, p, q, bg, rv, rbg, ll, rl], i) => (
            <DepthRow key={i}>
              <DepthLeft $bg={bg} $line={ll}><span>{v}</span><DepthPrice>{p}</DepthPrice><span>{q}</span></DepthLeft>
              <DepthRight $bg={rbg} $line={rl}>{rv}</DepthRight>
            </DepthRow>
          ))}
        </Depth>
      </Side>
    </Body>
  </Root>
);

function ToolUp() {
  return <svg width={8} height={6} viewBox="0 0 8 6"><path d="M4 0L8 6H0Z" fill={GREEN} /></svg>;
}

export default App;
